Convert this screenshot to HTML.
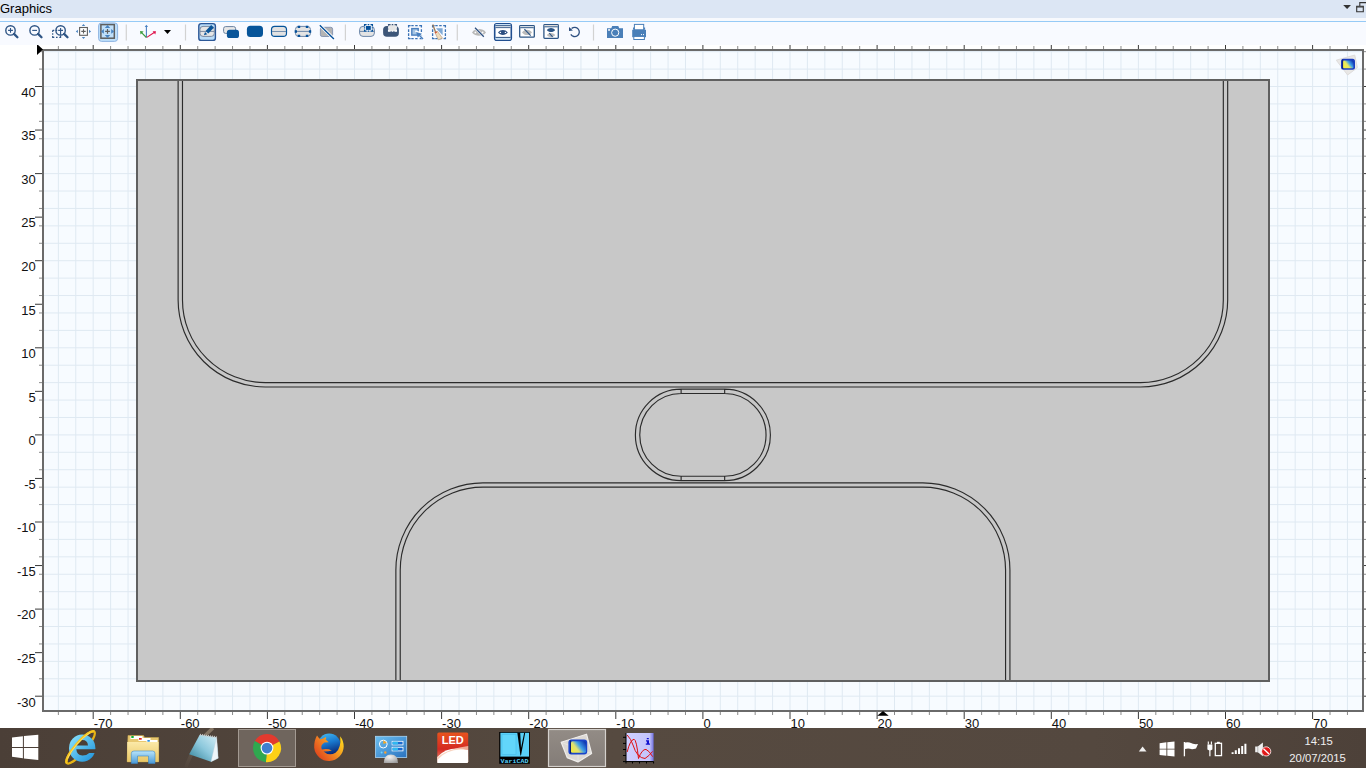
<!DOCTYPE html>
<html><head><meta charset="utf-8">
<style>
html,body{margin:0;padding:0;width:1366px;height:768px;overflow:hidden;background:#fff;font-family:"Liberation Sans",sans-serif;}
#title{position:absolute;left:0;top:0;width:1366px;height:18px;background:#dce6f4;}
#title span{position:absolute;left:0px;top:1px;font-size:13px;color:#000;line-height:16px;}
#strip{position:absolute;left:0;top:18px;width:1366px;height:3px;background:#f7f9fd;}
#bline{position:absolute;left:0;top:21px;width:1366px;height:1px;background:#96caf6;}
#tb{position:absolute;left:0;top:22px;width:1366px;height:23px;background:#f8faff;}
#plot{position:absolute;left:0;top:0;}
#task{position:absolute;left:0;top:728px;width:1366px;height:40px;background:#4d4037;}
svg{display:block}
</style></head><body>
<svg id="plot" width="1366" height="768" viewBox="0 0 1366 768">
<defs><linearGradient id="cyl2" x1="0" y1="0.8" x2="1" y2="0.2"><stop offset="0" stop-color="#f8f040"/><stop offset="0.4" stop-color="#e8e860"/><stop offset="0.65" stop-color="#40a0e8"/><stop offset="1" stop-color="#1038b0"/></linearGradient></defs>
<rect x="42" y="49" width="1322" height="663" fill="#f7fbff"/>
<path d="M58.36 49V712M75.78 49V712M93.2 49V712M110.62 49V712M128.04 49V712M145.46 49V712M162.88 49V712M180.3 49V712M197.72 49V712M215.14 49V712M232.56 49V712M249.98 49V712M267.4 49V712M284.82 49V712M302.24 49V712M319.66 49V712M337.08 49V712M354.5 49V712M371.92 49V712M389.34 49V712M406.76 49V712M424.18 49V712M441.6 49V712M459.02 49V712M476.44 49V712M493.86 49V712M511.28 49V712M528.7 49V712M546.12 49V712M563.54 49V712M580.96 49V712M598.38 49V712M615.8 49V712M633.22 49V712M650.64 49V712M668.06 49V712M685.48 49V712M702.9 49V712M720.32 49V712M737.74 49V712M755.16 49V712M772.58 49V712M790 49V712M807.42 49V712M824.84 49V712M842.26 49V712M859.68 49V712M877.1 49V712M894.52 49V712M911.94 49V712M929.36 49V712M946.78 49V712M964.2 49V712M981.62 49V712M999.04 49V712M1016.46 49V712M1033.88 49V712M1051.3 49V712M1068.72 49V712M1086.14 49V712M1103.56 49V712M1120.98 49V712M1138.4 49V712M1155.82 49V712M1173.24 49V712M1190.66 49V712M1208.08 49V712M1225.5 49V712M1242.92 49V712M1260.34 49V712M1277.76 49V712M1295.18 49V712M1312.6 49V712M1330.02 49V712M1347.44 49V712M42 696.2H1364M42 678.78H1364M42 661.36H1364M42 643.94H1364M42 626.52H1364M42 609.1H1364M42 591.68H1364M42 574.26H1364M42 556.84H1364M42 539.42H1364M42 522H1364M42 504.58H1364M42 487.16H1364M42 469.74H1364M42 452.32H1364M42 434.9H1364M42 417.48H1364M42 400.06H1364M42 382.64H1364M42 365.22H1364M42 347.8H1364M42 330.38H1364M42 312.96H1364M42 295.54H1364M42 278.12H1364M42 260.7H1364M42 243.28H1364M42 225.86H1364M42 208.44H1364M42 191.02H1364M42 173.6H1364M42 156.18H1364M42 138.76H1364M42 121.34H1364M42 103.92H1364M42 86.5H1364M42 69.08H1364M42 51.66H1364" stroke="#dfe9f2" stroke-width="1" fill="none"/>
<rect x="137" y="80" width="1132" height="601" fill="#c8c8c8"/>
<path d="M178.12 80V299.89A87.1 87.1 0 0 0 265.22 387H1140.58A87.1 87.1 0 0 0 1227.68 299.89V80M182.48 80V299.89A82.75 82.75 0 0 0 265.22 382.64H1140.58A82.75 82.75 0 0 0 1223.32 299.89V80M395.87 681V569.9A87.1 87.1 0 0 1 482.97 482.8H922.83A87.1 87.1 0 0 1 1009.93 569.9V681M400.23 681V569.9A82.75 82.75 0 0 1 482.97 487.16H922.83A82.75 82.75 0 0 1 1005.57 569.9V681M681.12 389.17H724.67A45.73 45.73 0 0 1 724.67 480.63H681.12A45.73 45.73 0 0 1 681.12 389.17ZM681.12 393.53H724.67A41.37 41.37 0 0 1 724.67 476.27H681.12A41.37 41.37 0 0 1 681.12 393.53ZM681.12 389.17V393.53M724.67 389.17V393.53M681.12 480.63V476.27M724.67 480.63V476.27" stroke="#2b2b2b" stroke-width="1.15" fill="none"/>
<rect x="137" y="80" width="1132" height="601" fill="none" stroke="#606060" stroke-width="2"/>
<rect x="43" y="50" width="1320" height="661" fill="none" stroke="#6a6a6a" stroke-width="2"/>
<path d="M58.36 712v3M58.36 49v-3M75.78 712v3M75.78 49v-3M110.62 712v3M110.62 49v-3M128.04 712v3M128.04 49v-3M145.46 712v3M145.46 49v-3M162.88 712v3M162.88 49v-3M197.72 712v3M197.72 49v-3M215.14 712v3M215.14 49v-3M232.56 712v3M232.56 49v-3M249.98 712v3M249.98 49v-3M284.82 712v3M284.82 49v-3M302.24 712v3M302.24 49v-3M319.66 712v3M319.66 49v-3M337.08 712v3M337.08 49v-3M371.92 712v3M371.92 49v-3M389.34 712v3M389.34 49v-3M406.76 712v3M406.76 49v-3M424.18 712v3M424.18 49v-3M459.02 712v3M459.02 49v-3M476.44 712v3M476.44 49v-3M493.86 712v3M493.86 49v-3M511.28 712v3M511.28 49v-3M546.12 712v3M546.12 49v-3M563.54 712v3M563.54 49v-3M580.96 712v3M580.96 49v-3M598.38 712v3M598.38 49v-3M633.22 712v3M633.22 49v-3M650.64 712v3M650.64 49v-3M668.06 712v3M668.06 49v-3M685.48 712v3M685.48 49v-3M720.32 712v3M720.32 49v-3M737.74 712v3M737.74 49v-3M755.16 712v3M755.16 49v-3M772.58 712v3M772.58 49v-3M807.42 712v3M807.42 49v-3M824.84 712v3M824.84 49v-3M842.26 712v3M842.26 49v-3M859.68 712v3M859.68 49v-3M894.52 712v3M894.52 49v-3M911.94 712v3M911.94 49v-3M929.36 712v3M929.36 49v-3M946.78 712v3M946.78 49v-3M981.62 712v3M981.62 49v-3M999.04 712v3M999.04 49v-3M1016.46 712v3M1016.46 49v-3M1033.88 712v3M1033.88 49v-3M1068.72 712v3M1068.72 49v-3M1086.14 712v3M1086.14 49v-3M1103.56 712v3M1103.56 49v-3M1120.98 712v3M1120.98 49v-3M1155.82 712v3M1155.82 49v-3M1173.24 712v3M1173.24 49v-3M1190.66 712v3M1190.66 49v-3M1208.08 712v3M1208.08 49v-3M1242.92 712v3M1242.92 49v-3M1260.34 712v3M1260.34 49v-3M1277.76 712v3M1277.76 49v-3M1295.18 712v3M1295.18 49v-3M1330.02 712v3M1330.02 49v-3M1347.44 712v3M1347.44 49v-3M42 678.78h-3M1364 678.78h3M42 661.36h-3M1364 661.36h3M42 643.94h-3M1364 643.94h3M42 626.52h-3M1364 626.52h3M42 591.68h-3M1364 591.68h3M42 574.26h-3M1364 574.26h3M42 556.84h-3M1364 556.84h3M42 539.42h-3M1364 539.42h3M42 504.58h-3M1364 504.58h3M42 487.16h-3M1364 487.16h3M42 469.74h-3M1364 469.74h3M42 452.32h-3M1364 452.32h3M42 417.48h-3M1364 417.48h3M42 400.06h-3M1364 400.06h3M42 382.64h-3M1364 382.64h3M42 365.22h-3M1364 365.22h3M42 330.38h-3M1364 330.38h3M42 312.96h-3M1364 312.96h3M42 295.54h-3M1364 295.54h3M42 278.12h-3M1364 278.12h3M42 243.28h-3M1364 243.28h3M42 225.86h-3M1364 225.86h3M42 208.44h-3M1364 208.44h3M42 191.02h-3M1364 191.02h3M42 156.18h-3M1364 156.18h3M42 138.76h-3M1364 138.76h3M42 121.34h-3M1364 121.34h3M42 103.92h-3M1364 103.92h3M42 69.08h-3M1364 69.08h3M42 51.66h-3M1364 51.66h3" stroke="#8a8a8a" stroke-width="1" fill="none"/>
<path d="M93.2 712v7M93.2 49v-5M180.3 712v7M180.3 49v-5M267.4 712v7M267.4 49v-5M354.5 712v7M354.5 49v-5M441.6 712v7M441.6 49v-5M528.7 712v7M528.7 49v-5M615.8 712v7M615.8 49v-5M702.9 712v7M702.9 49v-5M790 712v7M790 49v-5M877.1 712v7M877.1 49v-5M964.2 712v7M964.2 49v-5M1051.3 712v7M1051.3 49v-5M1138.4 712v7M1138.4 49v-5M1225.5 712v7M1225.5 49v-5M1312.6 712v7M1312.6 49v-5M42 696.2h-7M1364 696.2h3M42 652.65h-7M1364 652.65h3M42 609.1h-7M1364 609.1h3M42 565.55h-7M1364 565.55h3M42 522h-7M1364 522h3M42 478.45h-7M1364 478.45h3M42 434.9h-7M1364 434.9h3M42 391.35h-7M1364 391.35h3M42 347.8h-7M1364 347.8h3M42 304.25h-7M1364 304.25h3M42 260.7h-7M1364 260.7h3M42 217.15h-7M1364 217.15h3M42 173.6h-7M1364 173.6h3M42 130.05h-7M1364 130.05h3M42 86.5h-7M1364 86.5h3" stroke="#3a3a3a" stroke-width="1" fill="none"/>
<g font-family="Liberation Sans, sans-serif" font-size="13" fill="#111"><text x="35.7" y="706.5" text-anchor="end">-30</text><text x="35.7" y="662.95" text-anchor="end">-25</text><text x="35.7" y="619.4" text-anchor="end">-20</text><text x="35.7" y="575.85" text-anchor="end">-15</text><text x="35.7" y="532.3" text-anchor="end">-10</text><text x="35.7" y="488.75" text-anchor="end">-5</text><text x="35.7" y="445.2" text-anchor="end">0</text><text x="35.7" y="401.65" text-anchor="end">5</text><text x="35.7" y="358.1" text-anchor="end">10</text><text x="35.7" y="314.55" text-anchor="end">15</text><text x="35.7" y="271" text-anchor="end">20</text><text x="35.7" y="227.45" text-anchor="end">25</text><text x="35.7" y="183.9" text-anchor="end">30</text><text x="35.7" y="140.35" text-anchor="end">35</text><text x="35.7" y="96.8" text-anchor="end">40</text><text x="93.7" y="728.2">-70</text><text x="180.8" y="728.2">-60</text><text x="267.9" y="728.2">-50</text><text x="355" y="728.2">-40</text><text x="442.1" y="728.2">-30</text><text x="529.2" y="728.2">-20</text><text x="616.3" y="728.2">-10</text><text x="703.4" y="728.2">0</text><text x="790.5" y="728.2">10</text><text x="877.6" y="728.2">20</text><text x="964.7" y="728.2">30</text><text x="1051.8" y="728.2">40</text><text x="1138.9" y="728.2">50</text><text x="1226" y="728.2">60</text><text x="1313.1" y="728.2">70</text></g>
<path d="M37 44L43 49.5L37 55Z" fill="#000"/>
<path d="M877.2 715.8L883 710.9L888.7 715.8Z" fill="#000"/>
<path d="M1336.3 60.2L1354.7 55.1L1357.4 67.6L1347.6 75Z" fill="#e8e6e4" stroke="#dcdad8" stroke-width="1" opacity="0.9"/>
<rect x="1341" y="58.8" width="14" height="10.9" rx="2.5" fill="#1a3cc0"/>
<rect x="1343" y="60.4" width="10.5" height="7.8" rx="1" fill="url(#cyl2)"/>
<path d="M1342.6 59.5V69" stroke="#102070" stroke-width="0.9"/>
</svg>
<div id="title"><span>Graphics</span></div>
<div id="strip"></div><div id="bline"></div>
<div id="tb"></div>
<svg id="tbsvg" width="1366" height="45" viewBox="0 0 1366 45" style="position:absolute;left:0;top:0">
<g fill="none" stroke-linecap="butt">
<!-- zoom in -->
<g stroke="#2f5585">
<circle cx="10.5" cy="30.4" r="4.7" stroke-width="1.4"/>
<path d="M8.1 30.4h4.8M10.5 28v4.8" stroke-width="1.1"/>
<path d="M14 33.9L17.4 37.3" stroke-width="2.3" stroke-linecap="round"/>
<!-- zoom out -->
<circle cx="34.6" cy="30.4" r="4.7" stroke-width="1.4"/>
<path d="M32.2 30.4h4.8" stroke-width="1.1"/>
<path d="M38.1 33.9L41.5 37.3" stroke-width="2.3" stroke-linecap="round"/>
<!-- zoom box -->
<path d="M52.7 30.3h1.6M56 30.3h1.2M52.7 30.3v1.6M52.7 33.2v1.6M52.7 36.1v1.3h1.6M56 37.4h1.6M59.3 37.4h1.3v-1.3" stroke-width="1.2"/>
<circle cx="60.6" cy="30.4" r="4.7" stroke-width="1.4"/>
<path d="M58.2 30.4h4.8M60.6 28v7.5" stroke-width="1.1"/>
<path d="M64.1 33.9L67.5 37.3" stroke-width="2.3" stroke-linecap="round"/>
</g>
<!-- pan extents -->
<rect x="79.6" y="27.5" width="7.8" height="7.8" fill="#fff" stroke="#606060" stroke-width="1.1"/>
<path d="M81.3 31.4h4.4M83.5 29.2v4.4" stroke="#606060" stroke-width="1.1"/>
<path d="M83.5 24.1L85.2 25.9H81.8ZM83.5 38.9L85.2 37.1H81.8ZM75.8 31.4L77.9 29.8V33ZM91.1 31.4L89 29.8V33Z" fill="#4a84c0"/>
<!-- zoom extents selected -->
<rect x="98.6" y="22.9" width="19" height="18.5" rx="3" fill="#bfe0fb" stroke="#8fb4e2" stroke-width="1"/>
<rect x="100.9" y="24.6" width="13.4" height="13.6" fill="none" stroke="#5e5e5e" stroke-width="1.5"/>
<path d="M107.5 25L110.2 27.9H104.8ZM107.5 38L110.2 35.1H104.8ZM100.9 31.4L103.9 29.1V33.7ZM114.2 31.4L111.2 29.1V33.7Z" fill="#4a84c0"/>
<path d="M105.1 31.4h4.8M107.5 29v4.8" stroke="#5e5e5e" stroke-width="1.2"/>
<!-- separator -->
<path d="M126.3 24.5V40.5" stroke="#d2d2d2" stroke-width="1.2"/>
<!-- axis icon -->
<path d="M146.4 37.5V26" stroke="#4a80c0" stroke-width="1.1"/>
<path d="M146.4 24.8L148.1 26.9H144.7Z" fill="#4a80c0"/>
<path d="M146.4 37.5L141.3 32.3" stroke="#3a9a3a" stroke-width="1.1"/>
<path d="M140.1 31.1L143.6 31.5L140.5 34.5Z" fill="#3a9a3a"/>
<path d="M146.8 37.4L154.6 32.3" stroke="#e0104a" stroke-width="1.1"/>
<path d="M156 31.3L155.3 34.4L152.6 31.3Z" fill="#e0104a"/>
<path d="M164 29.9H171L167.5 33.9Z" fill="#000"/>
<path d="M185.5 24.5V40.5" stroke="#d2d2d2" stroke-width="1.2"/>
<!-- pencil selected -->
<rect x="198.8" y="23.6" width="16.6" height="16.8" rx="2.5" fill="#b9dcf8" stroke="#2b5797" stroke-width="1.4"/>
<rect x="200" y="26.4" width="14.3" height="10" rx="3" fill="#e6e6e6" stroke="#7a8aa0" stroke-width="1"/>
<path d="M200 31.4h14.3" stroke="#7a8aa0" stroke-width="1"/>
<path d="M205.6 31L211.2 25.1L213.8 27.7L208.3 33.6Z" fill="#0a5599"/>
<path d="M205 32L207.3 34.3L203.9 35.3Z" fill="#0a5599"/>
<!-- two rects -->
<rect x="223.6" y="26.6" width="12" height="6.8" rx="2" fill="#e8e8e8" stroke="#6a82a0" stroke-width="1"/>
<rect x="226.9" y="29.8" width="12.1" height="8.2" rx="2.6" fill="#0a5599"/>
<!-- solid rect -->
<rect x="246.9" y="25.8" width="16.1" height="11.2" rx="3.5" fill="#07559a"/>
<!-- outline rect -->
<rect x="271.5" y="26.4" width="15" height="10" rx="3.2" fill="#e2e2e2" stroke="#07559a" stroke-width="1.2"/>
<path d="M272 31.5h14" stroke="#6a88aa" stroke-width="0.9"/>
<!-- dotted rect -->
<rect x="295.4" y="26.4" width="15.1" height="10" rx="3.2" fill="#e4e4e4" stroke="#6d88aa" stroke-width="1"/>
<path d="M295.5 31.4h15" stroke="#6d88aa" stroke-width="1"/>
<path d="M297.7 25.8h2.5v2.3h-2.5zM305.8 25.8h2.5v2.3h-2.5zM294.7 30.2h2.3v2.5h-2.3zM308.9 30.2h2.3v2.5h-2.3zM297.7 34.7h2.5v2.3h-2.5zM305.8 34.7h2.5v2.3h-2.5z" fill="#05509a"/>
<!-- slash square -->
<rect x="320.4" y="27.3" width="12.2" height="9.2" rx="1.8" fill="#b4b4b4" stroke="#8192b0" stroke-width="0.9"/>
<path d="M319.8 25.2L333.9 38.9" stroke="#fff" stroke-width="3"/>
<path d="M319.8 25.2L333.9 38.9" stroke="#05509a" stroke-width="1.4"/>
<path d="M345.4 24.5V40.5" stroke="#d2d2d2" stroke-width="1.2"/>
<!-- icon A -->
<rect x="359.6" y="26.4" width="14.8" height="10" rx="3.4" fill="#e4e4e4" stroke="#6d88aa" stroke-width="1"/>
<path d="M359.6 31.4h14.8" stroke="#6d88aa" stroke-width="1"/>
<rect x="364.1" y="24.1" width="8.8" height="7.5" fill="#f8fafd"/>
<rect x="366" y="26" width="4.8" height="3.9" fill="#05509a"/>
<path d="M364.6 26.5V24.6H366.6M367.7 24.6H369.3M370.5 24.6H372.4V26.5M372.4 27.3V28.6M372.4 29.4V31.1H370.5M369.3 31.1H367.7M366.6 31.1H364.6V29.4M364.6 28.6V27.3" stroke="#05509a" stroke-width="1.3"/>
<!-- icon B -->
<rect x="383.1" y="25.9" width="15.8" height="10.8" rx="3.8" fill="#3d5678"/>
<rect x="388.5" y="24.5" width="8" height="6.7" fill="#e6e6e6"/>
<path d="M388.6 26.5V24.6H390.6M391.7 24.6H393.3M394.5 24.6H396.4V26.5M396.4 27.3V28.6M396.4 29.4V31.1H394.5M393.3 31.1H391.7M390.6 31.1H388.6V29.4M388.6 28.6V27.3" stroke="#fff" stroke-width="1.3"/>
<path d="M388.6 25.8V24.6H390.6M391.7 24.6H393.3M394.5 24.6H396.4V25.8" stroke="#3d5678" stroke-width="1.3"/>
<!-- select icon -->
<path d="M408.6 27.6V25.6H410.6M411.3 25.6H413.7M415.2 25.6H417.7M419.2 25.6H421.4V27.6M421.4 29.2V32M421.4 33.3V36M421.4 37.3V38.6H419.6M417.6 38.6H415.2M413.7 38.6H411.3M410.6 38.6H408.6V37.3M408.6 36V33.3M408.6 32V29.2" stroke="#3a72b5" stroke-width="1.3"/>
<rect x="411.8" y="28.6" width="6.4" height="6.5" fill="#a6c5e4" stroke="#4a7fbe" stroke-width="1.4"/>
<path d="M415.4 31.2L423.2 33.9L419.3 35.3L423.8 39.2" stroke="#fff" stroke-width="1.8" fill="#fff"/>
<path d="M416.1 32L422 33.8L417.7 37.5Z" fill="#4a80c0"/>
<path d="M419.3 35.3L423 38.9" stroke="#4a80c0" stroke-width="1.4"/>
<!-- broom icon -->
<path d="M432.6 27.6V25.6H434.6M435.3 25.6H437.7M439.2 25.6H441.7M443.2 25.6H445.4V27.6M445.4 29.2V32M445.4 33.3V36M445.4 37.3V38.6H443.6M441.6 38.6H439.2M437.7 38.6H435.3M434.6 38.6H432.6V37.3M432.6 36V33.3M432.6 32V29.2" stroke="#3a72b5" stroke-width="1.3"/>
<path d="M436 28.3H442.6V35.3Z" fill="#7fa9d6"/>
<path d="M432.8 24.5L435.5 32" stroke="#9a7a5a" stroke-width="1.3"/>
<path d="M434.8 32.2L437.5 31.4L442.5 38.2L438.3 39.8Z" fill="#f0dcbc" stroke="#a08060" stroke-width="0.5"/>
<path d="M434.8 32.2L437.3 31.3L437 32.6L435.1 33.4Z" fill="#d85030"/>
<path d="M457.3 24.5V40.5" stroke="#d2d2d2" stroke-width="1.2"/>
<!-- hidden eye -->
<path d="M472 32.4C475.50 28.00 482.50 28.00 486 32.4C482.50 36.80 475.50 36.80 472 32.4Z" fill="#b8b8b8"/>
<circle cx="475.4" cy="32.4" r="0.9" fill="#fff"/><circle cx="482.6" cy="32.4" r="0.9" fill="#fff"/>
<path d="M475 27.8L483.8 36.7" stroke="#fff" stroke-width="2.4"/>
<path d="M475 27.8L483.8 36.7" stroke="#2d4f80" stroke-width="1.3"/>
<!-- window eye selected -->
<rect x="494.7" y="23.9" width="16.6" height="16.4" rx="2" fill="#fff" stroke="#214e8f" stroke-width="1.6"/>
<path d="M495.5 24.8h15M495.5 38.6h15" stroke="#c9e2f6" stroke-width="1.6"/>
<path d="M495.5 25.7h15M495.5 27.6h15M495.5 37.4h15" stroke="#2a4f80" stroke-width="1"/>
<path d="M495.5 26.7h15" stroke="#c9d6e2" stroke-width="1"/>
<path d="M498 32.4C500.45 29.10 505.35 29.10 507.8 32.4C505.35 35.70 500.45 35.70 498 32.4Z" fill="#2d4f80"/>
<circle cx="500.4" cy="32.4" r="0.7" fill="#fff"/><circle cx="505.4" cy="32.4" r="0.7" fill="#fff"/>
<!-- window hidden eye -->
<rect x="519.7" y="25.6" width="14.6" height="11.6" rx="0.8" fill="#fff" stroke="#2d5585" stroke-width="1.3"/>
<path d="M520.3 26.6h13.4" stroke="#d5dde6" stroke-width="1"/>
<path d="M520.3 27.7h13.4" stroke="#2d5585" stroke-width="1"/>
<path d="M522 32.4C524.50 29.00 529.50 29.00 532 32.4C529.50 35.80 524.50 35.80 522 32.4Z" fill="#bcbcbc"/>
<path d="M524.4 29.2L530.7 35.6" stroke="#2d5585" stroke-width="1.2"/>
<!-- window two eyes -->
<rect x="543.9" y="24.7" width="14.4" height="13.6" rx="0.8" fill="#fff" stroke="#2d5585" stroke-width="1.3"/>
<path d="M544.5 25.6h13.2" stroke="#e0dcd8" stroke-width="1"/>
<path d="M544.5 26.8h13.2" stroke="#2d5585" stroke-width="1"/>
<path d="M546.8 30C548.90 27.20 553.10 27.20 555.2 30C553.10 32.80 548.90 32.80 546.8 30Z" fill="#2d5585"/>
<path d="M546.8 35.1C548.90 32.30 553.10 32.30 555.2 35.1C553.10 37.90 548.90 37.90 546.8 35.1Z" fill="#bcbcbc"/>
<path d="M549.2 33L552.6 36.8" stroke="#2d5585" stroke-width="1.1"/>
<!-- undo -->
<path d="M571.6 28.6A4.6 4.6 0 1 1 570.8 34.4" stroke="#2d4f80" stroke-width="1.3"/>
<path d="M569 26.9L569 30.9L572.9 30.5Z" fill="#2d4f80"/>
<path d="M593.5 24.5V40.5" stroke="#d2d2d2" stroke-width="1.2"/>
<!-- camera -->
<path d="M607 28.2H611.3L612.2 25.9H618.3L619.2 28.2H623V37.9H607Z" fill="#4a7fb8"/>
<circle cx="615.2" cy="32.7" r="3.6" fill="#4a7fb8" stroke="#fff" stroke-width="1"/>
<rect x="608.2" y="29.1" width="1.7" height="1.7" fill="#fff"/>
<!-- printer -->
<rect x="634.4" y="24.4" width="9.3" height="5.4" fill="#fff" stroke="#4a7fb8" stroke-width="1"/>
<path d="M632.2 29.8H646V37.2H632.2Z" fill="#4a7fb8"/>
<path d="M633 27.5h1.4v2.3H633zM643.7 27.5h1.4v2.3h-1.4z" fill="#4a7fb8"/>
<rect x="633.8" y="36.4" width="10.6" height="3.1" fill="#fff" stroke="#4a7fb8" stroke-width="1"/>
<rect x="641" y="34.1" width="1" height="1" fill="#fff"/><rect x="643" y="34.1" width="1" height="1" fill="#fff"/>
<!-- title bar right icons -->
<path d="M1343.2 4.9H1351L1347.1 9.1Z" fill="#333"/>
<path d="M1356.7 6.3h6.6v5.4h-6.6zM1359.8 6.3V2.6H1366.5" stroke="#333" stroke-width="1.1"/><path d="M1356.7 7h6.6" stroke="#333" stroke-width="1"/>
</g>
</svg>

<div id="task"></div>
<svg id="tasksvg" width="1366" height="40" viewBox="0 728 1366 40" style="position:absolute;left:0;top:728px">
<defs>
<linearGradient id="streak" x1="0" y1="1" x2="0.3" y2="0"><stop offset="0" stop-color="#5a4d43" stop-opacity="0.3"/><stop offset="1" stop-color="#8a7a68" stop-opacity="0.9"/></linearGradient>
<linearGradient id="tbg" x1="0" x2="1" y1="0" y2="0">
<stop offset="0" stop-color="#4b3f37"/><stop offset="0.45" stop-color="#564a40"/><stop offset="0.8" stop-color="#54483f"/><stop offset="1" stop-color="#4d4139"/>
</linearGradient>
<linearGradient id="ieg" x1="0" y1="0" x2="1" y2="1"><stop offset="0" stop-color="#8fe6ff"/><stop offset="1" stop-color="#1a8fd8"/></linearGradient>
<linearGradient id="fold" x1="0" y1="0" x2="0" y2="1"><stop offset="0" stop-color="#fbe9a8"/><stop offset="1" stop-color="#e9c765"/></linearGradient>
<linearGradient id="stand" x1="0" y1="0" x2="0" y2="1"><stop offset="0" stop-color="#b8e4fa"/><stop offset="1" stop-color="#4a9ad8"/></linearGradient>
<linearGradient id="note" x1="0" y1="1" x2="1" y2="0"><stop offset="0" stop-color="#2f7f96"/><stop offset="0.5" stop-color="#8cc8dc"/><stop offset="1" stop-color="#d8f0f8"/></linearGradient>
<linearGradient id="cpg" x1="0" y1="0" x2="1" y2="1"><stop offset="0" stop-color="#6cc0f0"/><stop offset="1" stop-color="#2a72c0"/></linearGradient>
<radialGradient id="dome" cx="0.4" cy="0.3" r="0.8"><stop offset="0" stop-color="#f4f4f4"/><stop offset="1" stop-color="#9a9a9a"/></radialGradient>
<linearGradient id="ledg" x1="0" y1="0" x2="0" y2="1"><stop offset="0" stop-color="#e8541e"/><stop offset="0.55" stop-color="#d42a22"/><stop offset="1" stop-color="#f0a080"/></linearGradient>
<linearGradient id="csbox" x1="0" y1="0" x2="0" y2="1"><stop offset="0" stop-color="#938c86"/><stop offset="1" stop-color="#837c77"/></linearGradient>
<linearGradient id="cyl" x1="0" y1="0.8" x2="1" y2="0.2"><stop offset="0" stop-color="#f0e840"/><stop offset="0.35" stop-color="#e0e070"/><stop offset="0.6" stop-color="#40a0e8"/><stop offset="1" stop-color="#1038b0"/></linearGradient>
<linearGradient id="ffo" x1="0" y1="1" x2="1" y2="0.3"><stop offset="0" stop-color="#d8301a"/><stop offset="0.5" stop-color="#f07a22"/><stop offset="1" stop-color="#ffd21e"/></linearGradient>
<linearGradient id="ffb" x1="0" y1="0" x2="0.3" y2="1"><stop offset="0" stop-color="#48c0f4"/><stop offset="0.5" stop-color="#1a7ad0"/><stop offset="1" stop-color="#0a2a78"/></linearGradient>
<linearGradient id="plotg" x1="0" x2="1"><stop offset="0" stop-color="#d0d0ff"/><stop offset="0.85" stop-color="#c4c4fa"/><stop offset="1" stop-color="#7070e0"/></linearGradient>
</defs>
<rect x="0" y="728" width="1366" height="40" fill="url(#tbg)"/>
<path d="M186 767Q193 745 213 728" stroke="url(#streak)" stroke-width="3.5" fill="none"/>
<!-- windows start -->
<path d="M12 737.5L22.9 736.2V747H12ZM23.9 736.1L38.3 734.8V747H23.9ZM12 748H22.9V758.3L12 756.7ZM23.9 748H38.3V760.1L23.9 758.4Z" fill="#fff"/>
<!-- IE -->
<g transform="translate(80.6 747.4) rotate(-49)"><ellipse rx="20.8" ry="5.3" fill="none" stroke="#e8b414" stroke-width="2.3"/></g>
<ellipse cx="82.2" cy="748.2" rx="13.2" ry="13.6" fill="url(#ieg)"/>
<path d="M76.5 745.5Q76.9 740 82.3 740Q87.7 740 88 745.5Z" fill="#4a3e36"/>
<path d="M76.3 749.2H96V753H89.2Q86.5 755.7 82.3 755.6Q76.8 755 76.3 749.2Z" fill="#4a3e36"/>
<g transform="translate(80.6 747.4) rotate(-49)"><path d="M-20.8 0A20.8 5.3 0 0 1 20.8 0" fill="none" stroke="#f7c51e" stroke-width="2.4"/><path d="M-17 -2.5A20.8 5.3 0 0 1 17 -2.5" fill="none" stroke="#fff4b0" stroke-width="0.7" opacity="0.7"/></g>
<!-- explorer -->
<path d="M128 735.5H143.5L144.5 737.5H158.6V761.8H127.2Z" fill="#e8c870" stroke="#c8a850" stroke-width="0.6"/>
<rect x="130.5" y="736" width="12" height="3" fill="#fff"/>
<rect x="131.3" y="736" width="2.4" height="2" fill="#10b030"/>
<rect x="138.5" y="738" width="12" height="3" fill="#fff"/>
<rect x="139" y="738" width="2.7" height="1.7" fill="#e02020"/>
<rect x="146.5" y="740" width="11" height="3" fill="#fff"/>
<rect x="147.4" y="740" width="2.4" height="1.7" fill="#2a90e0"/>
<path d="M127.2 742H158.6V761.8H127.2Z" fill="url(#fold)"/>
<path d="M131.3 763.4V753.5Q131.3 751 134 751H152.5Q155 751 155 753.5V763.4H148.5V756H137.5V763.4Z" fill="url(#stand)" stroke="#3a88c8" stroke-width="0.6"/>
<!-- notepad -->
<path d="M199.7 734.8L216.6 737.2L218.2 758.2L211 761.8L189.2 754.2Z" fill="url(#note)"/>
<path d="M211 761.8L216.6 737.2L218.2 758.2Z" fill="#eef6fa" stroke="#c0d0d8" stroke-width="0.4"/>
<path d="M200 734.8L216.6 737.2" stroke="#c8c8c8" stroke-width="2" stroke-dasharray="1 1"/>
<!-- chrome box -->
<rect x="238.5" y="729.5" width="57" height="37" fill="#6f655d" stroke="#a39a92" stroke-width="1"/>
<!-- chrome -->
<g transform="translate(267 748.1)">
<path d="M0 0L-12.2 -7A14.1 14.1 0 0 1 12.4 -6.6Z" fill="#e23a2e"/>
<path d="M0 0L12.4 -6.6A14.1 14.1 0 0 1 -1.1 14.05Z" fill="#fcd116"/>
<path d="M0 0L-1.1 14.05A14.1 14.1 0 0 1 -12.2 -7Z" fill="#2fa84f"/>
<circle r="6.4" fill="#fff"/><circle r="5.3" fill="#3f7fd0"/>
</g>
<!-- firefox -->
<circle cx="329.2" cy="744.6" r="11.2" fill="url(#ffb)"/>
<path d="M317 735.5Q313.8 741 314.2 747.8A14.8 14.8 0 0 0 343.7 746.5Q343.6 740.5 340.2 736.2Q341.5 748 335.5 752.8Q329 756.5 323.5 751.5Q327.5 751.8 331.8 750.4Q327 748.2 321.8 749.6Q320 745 324.5 742.5L328.8 742.2L325.6 739.6Q326.6 738 326 737Q322.8 739 320.3 739.2Q318.5 737.8 317 735.5Z" fill="url(#ffo)"/>
<!-- control panel -->
<rect x="375.5" y="736.3" width="31.2" height="21.2" fill="url(#cpg)" stroke="#a8d4f4" stroke-width="0.8"/>
<circle cx="383.3" cy="744.1" r="3.9" fill="none" stroke="#fff" stroke-width="1"/>
<path d="M383.3 740.2L386.8 742.7L383.3 744Z" fill="#f8a820"/>
<rect x="392.1" y="741.3" width="10.9" height="3.6" fill="#1a6ad0" stroke="#fff" stroke-width="0.8"/>
<rect x="392.5" y="741.7" width="5.5" height="2.8" fill="#30b8f0"/>
<rect x="392.1" y="747.3" width="10.9" height="3.6" fill="#1a6ad0" stroke="#fff" stroke-width="0.8"/>
<rect x="392.5" y="747.7" width="5.5" height="2.8" fill="#30b8f0"/>
<circle cx="381.6" cy="752.5" r="1" fill="#70d8ff"/><circle cx="385.3" cy="752.5" r="1.2" fill="#f8a030"/>
<path d="M383.8 763Q383.8 754.5 390.9 754.5Q398 754.5 398 763Z" fill="url(#dome)"/>
<!-- LED -->
<rect x="437.3" y="732.4" width="30.9" height="30.6" rx="1.6" fill="url(#ledg)"/>
<path d="M437.3 763V757Q448 745 468.2 750V761.4Q468.2 763 466.6 763Z" fill="#fff"/>
<path d="M437.3 757Q450 748 468.2 746V750Q448 747 437.3 760Z" fill="#f6c8b0" opacity="0.8"/>
<text x="452.8" y="744.2" text-anchor="middle" font-family="Liberation Sans, sans-serif" font-weight="bold" font-size="11.6" fill="#fff" textLength="22" lengthAdjust="spacingAndGlyphs">LED</text>
<!-- VariCAD -->
<rect x="499.2" y="732" width="30.6" height="31.8" fill="#000"/>
<rect x="500.4" y="732.8" width="28.6" height="23.8" fill="#5ad0f8"/>
<rect x="502" y="734.5" width="14" height="20" fill="#62d6fa" stroke="#48bce8" stroke-width="0.6"/>
<path d="M517.3 732.8H520.2L521 748L524.2 732.8H525.2L521 755.5H520.4Z" fill="#000"/>
<text x="514.5" y="762.6" text-anchor="middle" font-family="Liberation Mono, monospace" font-weight="bold" font-size="6.2" fill="#5ad0f8" textLength="28" lengthAdjust="spacingAndGlyphs">VariCAD</text>
<!-- COMSOL box -->
<rect x="548.5" y="729.5" width="57" height="37" fill="url(#csbox)" stroke="#d4d0cc" stroke-width="1.2"/>
<path d="M561.2 742.2L586.5 734.2L591.6 753.4L578 761.9L567.2 757.6Z" fill="#dcd8d4" stroke="#f0eeec" stroke-width="1.2" stroke-linejoin="round"/>
<path d="M561.2 742.2L578 749L591.6 753.4M578 749L578 761.9" stroke="#ecebea" stroke-width="0.6" fill="none"/>
<rect x="568.4" y="739.6" width="18.8" height="15" rx="3" fill="#1a44c8"/>
<rect x="571" y="741.2" width="15" height="11.6" rx="1.5" fill="url(#cyl)"/>
<path d="M570.5 740.5V753.5" stroke="#102070" stroke-width="1"/>
<!-- plot icon -->
<rect x="626" y="733" width="27.6" height="28" fill="url(#plotg)"/>
<path d="M626 733V761.6H653.6M623 737.3H626M623 743.4H626M623 749.5H626M623 755.5H626M623 761.6H626M626 761.6V763.5M632.5 761.6V763.5M639.5 761.6V763.5M646.5 761.6V763.5M653.6 761.6V763.5" stroke="#000" stroke-width="1" fill="none"/>
<path d="M627.2 752Q630 740 634 739.2Q636.5 739.5 638.5 758.5Q642 749 646 749.4Q649 750.5 652.7 756.7" stroke="#e01010" stroke-width="1" fill="none"/>
<path d="M627.2 735Q631 739 633 745Q637 758 645 758.5Q649 756 652.7 751.4" stroke="#e01010" stroke-width="1" fill="none"/>
<path d="M646.8 737.9h2v1.3h-2zM646 740.3h3v3.3h1v1.2h-4.2v-1.2h1.1v-2.1h-0.9z" fill="#1010d0"/>
<!-- tray -->
<path d="M1138.8 751.4L1142.6 746.4L1146.5 751.4Z" fill="#f0f0f0"/>
<path d="M1159.6 743.2L1166.4 742.3V748.7H1159.6ZM1167.3 742.2L1174.5 741.4V748.7H1167.3ZM1159.6 749.6H1166.4V755.7L1159.6 754.9ZM1167.3 749.6H1174.5V756.4L1167.3 755.8Z" fill="#fff"/>
<path d="M1184.4 742V756.3" stroke="#fff" stroke-width="1.3"/>
<path d="M1185 742.5Q1189 741.8 1191 743Q1193 744.5 1198 744L1196 748.5Q1192 749.8 1190 748.8Q1188 748 1185 749Z" fill="#fff"/>
<path d="M1208.3 741.6V744.5M1211.4 741.6V744.5" stroke="#fff" stroke-width="1.1"/>
<path d="M1207.4 744.5H1212.4V749.5L1210.5 750.5V756.3H1209.3V750.5L1207.4 749.5Z" fill="#fff"/>
<rect x="1215.3" y="743.3" width="6.2" height="12.3" fill="none" stroke="#fff" stroke-width="1.3"/>
<rect x="1217" y="741.8" width="2.8" height="1.5" fill="#fff"/>
<path d="M1231.6 752.3h2v1.8h-2zM1234.8 750.3h2v3.8h-2zM1238 748.3h2v5.8h-2zM1241.2 746h2v8.1h-2zM1244.4 743.7h2v10.4h-2z" fill="#fff"/>
<path d="M1255.2 746.5H1257.8L1262.9 742.5V756.3L1257.8 752.3H1255.2Z" fill="#f0f0f0"/>
<path d="M1257.8 746.5V752.3" stroke="#a0a0a0" stroke-width="0.7"/>
<circle cx="1266.2" cy="751.4" r="4.6" fill="#e01818" stroke="#fff" stroke-width="0.8"/>
<path d="M1263.5 748.8L1269 754" stroke="#fff" stroke-width="1.3"/>
<g font-family="Liberation Sans, sans-serif" font-size="11.3" fill="#f0f0f0" text-anchor="middle">
<text x="1318.6" y="745">14:15</text>
<text x="1317.6" y="762.2">20/07/2015</text>
</g>
</svg>

</body></html>
